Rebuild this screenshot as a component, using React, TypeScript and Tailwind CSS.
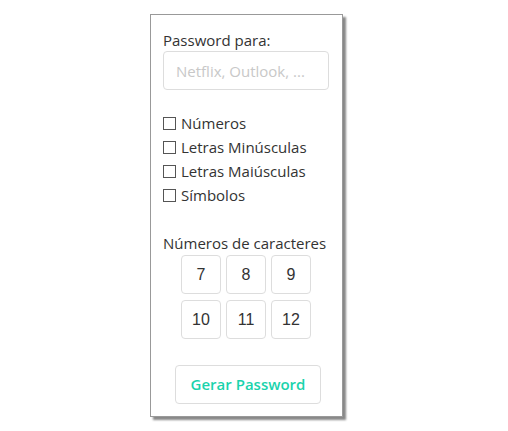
import { useState } from "react";

const opcoes = ["Números", "Letras Minúsculas", "Letras Maiúsculas", "Símbolos"];
const tamanhos = [7, 8, 9, 10, 11, 12];

export default function App() {
    const [marcados, setMarcados] = useState<string[]>([]);
    const [tamanho, setTamanho] = useState<number | null>(null);

    const toggle = (o: string) =>
        setMarcados((m) => (m.includes(o) ? m.filter((x) => x !== o) : [...m, o]));

    return (
        <div
            className="w-[508px] h-[431px] bg-white text-[#333] text-[15px]"
            style={{ fontFamily: '"Open Sans", "Noto Sans", sans-serif' }}
        >
            <div className="ml-[150px] pt-[14px]">
                <div className="w-[193px] border border-[#999] bg-white pt-[14px] pb-[12px] pl-3 pr-[13px] shadow-[3px_3px_2px_#888]">
                    {/* Password para */}
                    <label className="block h-[22px] leading-[22px]">Password para:</label>
                    <input
                        type="text"
                        placeholder="Netflix, Outlook, ..."
                        className="block w-full h-[39px] mt-0 rounded border border-[#ddd] px-3 text-[15px] placeholder:text-[#c8c8c8] outline-none"
                    />

                    {/* Opcoes */}
                    <div className="mt-[21px] flex flex-col">
                        {opcoes.map((o) => (
                            <label
                                key={o}
                                onClick={() => toggle(o)}
                                className="flex items-center h-[24px] cursor-pointer select-none"
                            >
                                <span className="w-[13px] h-[13px] border border-[#555] bg-white flex items-center justify-center text-[10px] leading-none">
                                    {marcados.includes(o) ? "✓" : ""}
                                </span>
                                <span className="ml-[5px] leading-[24px]">{o}</span>
                            </label>
                        ))}
                    </div>

                    {/* Tamanho */}
                    <p className="mt-[25px] h-[22px] leading-[22px] whitespace-nowrap">Números de caracteres</p>
                    <div className="mt-px ml-[18px] grid grid-cols-[40px_40px_40px] gap-x-[5px] gap-y-[6px]">
                        {tamanhos.map((t) => (
                            <button
                                key={t}
                                onClick={() => setTamanho(t)}
                                className={`h-[39px] rounded border border-[#ddd] text-[16px] text-[#333] ${
                                    tamanho === t ? "bg-[#eee]" : "bg-white"
                                }`}
                                style={{ fontFamily: '"Liberation Sans", Arial, sans-serif' }}
                            >
                                {t}
                            </button>
                        ))}
                    </div>

                    <div className="mt-[26px] ml-3">
                        <button className="w-[146px] h-[39px] rounded border border-[#ddd] bg-white text-[15px] font-semibold text-[#1ad3ac]">
                            Gerar Password
                        </button>
                    </div>
                </div>
            </div>
        </div>
    );
}
